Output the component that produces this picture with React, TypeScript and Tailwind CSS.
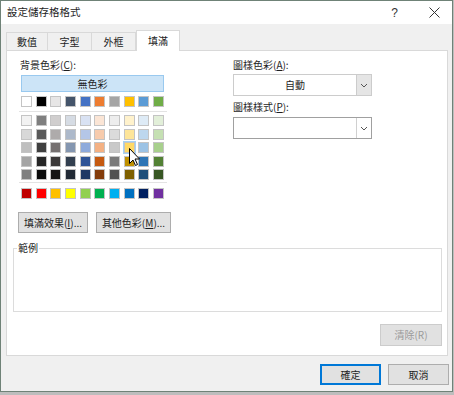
import React from 'react';

const themeRow = ['#FFFFFF', '#000000', '#E7E6E6', '#44546A', '#4472C4', '#ED7D31', '#A5A5A5', '#FFC000', '#5B9BD5', '#70AD47'];

const tintRows = [
  ['#F2F2F2', '#7F7F7F', '#D0CECE', '#D6DCE4', '#D9E2F3', '#FBE5D5', '#EDEDED', '#FFF2CC', '#DEEBF6', '#E2EFD9'],
  ['#D8D8D8', '#595959', '#AEABAB', '#ADB9CA', '#B4C6E7', '#F7CBAC', '#DBDBDB', '#FEE599', '#BDD7EE', '#C5E0B3'],
  ['#BFBFBF', '#3F3F3F', '#757070', '#8496B0', '#8EAADB', '#F4B183', '#C9C9C9', '#FFD965', '#9CC3E5', '#A8D08D'],
  ['#A5A5A5', '#262626', '#3A3838', '#323F4F', '#2F5496', '#C55A11', '#7B7B7B', '#BF9000', '#2E75B5', '#538135'],
  ['#7F7F7F', '#0C0C0C', '#171616', '#222A35', '#1F3864', '#833C0B', '#525252', '#7F6000', '#1E4E79', '#375623'],
];

const standardRow = ['#C00000', '#FF0000', '#FFC000', '#FFFF00', '#92D050', '#00B050', '#00B0F0', '#0070C0', '#002060', '#7030A0'];

const rowGaps = ['', 'mt-[3px]', 'mt-[2px]', 'mt-[3px]', 'mt-[2px]'];

function Swatch({ color, hover }: { color: string; hover?: boolean }) {
  return (
    <div
      className={
        hover
          ? 'h-[11px] w-[11px] border border-[#c4c4c4] outline outline-1 outline-[#a6d2f4]'
          : 'h-[11px] w-[11px] border border-[#c4c4c4]'
      }
      style={{ backgroundColor: color }}
    />
  );
}

function SwatchRow({ colors, hoverIndex, className = '' }: { colors: string[]; hoverIndex?: number; className?: string }) {
  return (
    <div className={`flex w-[143px] justify-between ${className}`}>
      {colors.map((c, i) => (
        <Swatch key={i} color={c} hover={i === hoverIndex} />
      ))}
    </div>
  );
}

function Chevron() {
  return (
    <svg width="8" height="5" viewBox="0 0 8 5">
      <path d="M1 1 L4 4 L7 1" fill="none" stroke="#555" strokeWidth="1" />
    </svg>
  );
}

export default function App() {
  return (
    <div className="h-[395px] w-[454px] overflow-hidden bg-[#bdbdbd] font-['Noto_Sans_CJK_TC','Noto_Sans',sans-serif] text-[10px] leading-none text-[#1e1e1e]">
      <div className="flex h-[392px] w-[453px] flex-col border border-[#6f8277] bg-[#f0f0f0]">
        {/* title bar */}
        <div className="flex h-[23px] items-center bg-white pl-[6px]">
          <span className="text-[10.5px]">設定儲存格格式</span>
          <span className="ml-auto mr-[31px] text-[12px] text-[#333] font-['Liberation_Sans',sans-serif]">?</span>
          <svg className="mr-[12px]" width="11" height="11" viewBox="0 0 11 11">
            <path d="M0.5 0.5 L10.5 10.5 M10.5 0.5 L0.5 10.5" stroke="#333" strokeWidth="1" />
          </svg>
        </div>

        {/* tabs */}
        <div className="ml-[5px] mt-[6px] flex h-[20px] items-end">
          <div className="flex h-[18px] w-[42px] items-center justify-center border border-b-0 border-[#d9d9d9]">數值</div>
          <div className="flex h-[18px] w-[44px] items-center justify-center border border-b-0 border-l-0 border-[#d9d9d9]">字型</div>
          <div className="flex h-[18px] w-[44px] items-center justify-center border border-b-0 border-l-0 border-[#d9d9d9]">外框</div>
          <div className="relative z-10 -mb-px flex h-[21px] w-[44px] items-center justify-center border border-b-0 border-[#d9d9d9] bg-white">填滿</div>
        </div>

        {/* panel */}
        <div className="ml-[5px] flex h-[306px] w-[442px] flex-col border border-[#d9d9d9] bg-white">
          <div className="flex">
            {/* left column */}
            <div className="ml-[12px] flex w-[148px] flex-col pt-[9px]">
              <div className="pl-[1px]">
                背景色彩(<span className="underline">C</span>):
              </div>
              <div className="ml-[2px] mt-[5px] flex h-[17px] w-[143px] items-center justify-center border border-[#99c9ef] bg-[#cce4f7]">
                無色彩
              </div>
              <SwatchRow colors={themeRow} className="ml-[2px] mt-[4px]" />
              <div className="mt-[4px] h-px w-[148px] bg-[#e3e3e3]" />
              <div className="ml-[2px] mt-[3px] flex flex-col">
                {tintRows.map((row, i) => (
                  <SwatchRow key={i} colors={row} hoverIndex={i === 2 ? 7 : undefined} className={rowGaps[i]} />
                ))}
              </div>
              <div className="mt-[2px] h-px w-[148px] bg-[#e3e3e3]" />
              <SwatchRow colors={standardRow} className="ml-[2px] mt-[5px]" />
            </div>

            {/* right column */}
            <div className="ml-[66px] flex w-[139px] flex-col pt-[9px]">
              <div>
                圖樣色彩(<span className="underline">A</span>):
              </div>
              <div className="mt-[4px] flex h-[22px] border border-[#cccccc] bg-white">
                <div className="flex flex-1 items-center justify-center">自動</div>
                <div className="flex w-[15px] items-center justify-center border-l border-[#cccccc] bg-[#e5e5e5]">
                  <Chevron />
                </div>
              </div>
              <div className="mt-[6px]">
                圖樣樣式(<span className="underline">P</span>):
              </div>
              <div className="mt-[5px] flex h-[22px] border border-[#a0a0a0] bg-white">
                <div className="flex-1" />
                <div className="flex w-[15px] items-center justify-center border-l border-[#d0d0d0]">
                  <Chevron />
                </div>
              </div>
            </div>
          </div>

          {/* fill buttons */}
          <div className="ml-[11px] mt-[13px] flex gap-[8px]">
            <div className="flex h-[21px] w-[70px] items-center justify-center border border-[#adadad] bg-[#e1e1e1]">
              填滿效果(<span className="underline">I</span>)...
            </div>
            <div className="flex h-[21px] w-[75px] items-center justify-center border border-[#adadad] bg-[#e1e1e1]">
              其他色彩(<span className="underline">M</span>)...
            </div>
          </div>

          {/* sample group */}
          <div className="relative ml-[6px] mt-[15px] h-[64px] w-[429px] border border-[#dcdcdc]">
            <span className="absolute left-[3px] top-[-6px] bg-white px-[1px]">範例</span>
          </div>

          {/* clear */}
          <div className="mr-[5px] mt-[12px] flex h-[22px] w-[62px] items-center justify-center self-end border border-[#cccccc] bg-[#e1e1e1] text-[#9a9a9a]">
            清除(R)
          </div>
        </div>

        {/* dialog buttons */}
        <div className="mr-[3px] mt-[8px] flex justify-end gap-[7px]">
          <div className="flex h-[21px] w-[61px] items-center justify-center border border-[#0078d7] bg-[#e1e1e1] shadow-[inset_0_0_0_1px_#0078d7]">
            確定
          </div>
          <div className="flex h-[21px] w-[61px] items-center justify-center border border-[#adadad] bg-[#e1e1e1]">
            取消
          </div>
        </div>
      </div>

      {/* mouse pointer */}
      <svg className="absolute left-[129px] top-[148px]" width="12" height="19" viewBox="0 0 12 19">
        <path d="M0.5 0.5 L0.5 15.5 L4 12 L6.5 17.5 L8.5 16.5 L6 11 L10.5 11 Z" fill="white" stroke="black" strokeWidth="1" />
      </svg>
    </div>
  );
}
